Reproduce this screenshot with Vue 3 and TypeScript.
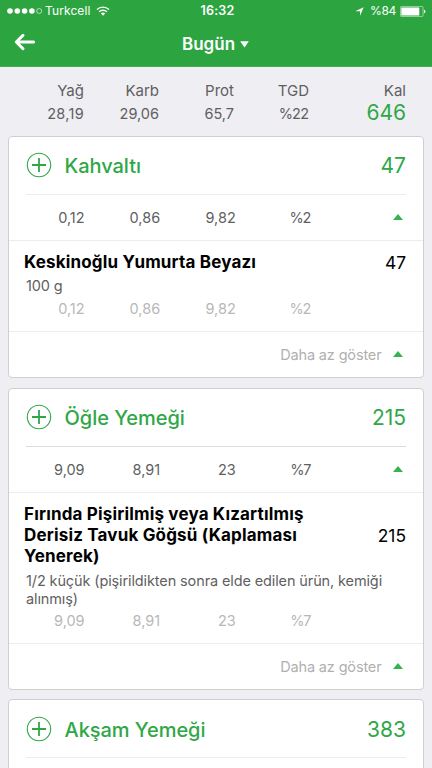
<script setup lang="ts">
interface Food {
  name: string[]
  portion: string[]
  kcal: string
}

interface Meal {
  id: string
  title: string
  kcal: string
  macros: string[]
  food?: Food
}

const summary = [
  { label: 'Yağ', value: '28,19' },
  { label: 'Karb', value: '29,06' },
  { label: 'Prot', value: '65,7' },
  { label: 'TGD', value: '%22' },
]

const meals: Meal[] = [
  {
    id: 'breakfast',
    title: 'Kahvaltı',
    kcal: '47',
    macros: ['0,12', '0,86', '9,82', '%2'],
    food: { name: ['Keskinoğlu Yumurta Beyazı'], portion: ['100 g'], kcal: '47' },
  },
  {
    id: 'lunch',
    title: 'Öğle Yemeği',
    kcal: '215',
    macros: ['9,09', '8,91', '23', '%7'],
    food: {
      name: ['Fırında Pişirilmiş veya Kızartılmış', 'Derisiz Tavuk Göğsü (Kaplaması', 'Yenerek)'],
      portion: ['1/2 küçük (pişirildikten sonra elde edilen ürün, kemiği', 'alınmış)'],
      kcal: '215',
    },
  },
  { id: 'dinner', title: 'Akşam Yemeği', kcal: '383', macros: [] },
]
</script>

<template>
  <div class="screen">
    <header class="top">
      <div class="status">
        <div class="carrier">
          <svg class="signal" width="36" height="8" viewBox="0 0 36 8">
            <circle v-for="n in 4" :key="n" :cx="3 + (n - 1) * 7.3" cy="4" r="2.8" fill="#fff" />
            <circle cx="32.2" cy="4" r="2.5" fill="none" stroke="#fff" stroke-width=".6" />
          </svg>
          <span class="operator">Turkcell</span>
          <svg class="wifi" width="14" height="10" viewBox="0 0 14 10">
            <path d="M1 3.5a8.7 8.7 0 0 1 12 0M3.1 5.8a5.7 5.7 0 0 1 7.8 0" fill="none" stroke="#fff" stroke-width="1.4" />
            <path d="M7 9.7 4.8 7.5a3.2 3.2 0 0 1 4.4 0Z" fill="#fff" />
          </svg>
        </div>
        <span class="clock">16:32</span>
        <div class="power">
          <svg class="location" width="9" height="9" viewBox="0 0 9 9">
            <path d="M8.7.3 5 8.7V4.3H.3Z" fill="#fff" />
          </svg>
          <span class="percent">%84</span>
          <svg width="26" height="11" viewBox="0 0 26 11">
            <rect x=".4" y=".4" width="22.6" height="10.2" rx="1.2" fill="none" stroke="#fff" stroke-opacity=".75" stroke-width=".7" />
            <rect x="1.3" y="1.4" width="18" height="8.2" rx=".5" fill="#fff" />
            <path d="M24 3.8q1.4.2 1.4 1.7T24 7.2Z" fill="#fff" />
          </svg>
        </div>
      </div>
      <nav class="nav">
        <svg class="back" width="22" height="18" viewBox="0 0 22 18">
          <path d="M9 2.3 2.3 9 9 15.7M2.6 9H19.6" fill="none" stroke="#fff" stroke-width="3" stroke-linecap="round" stroke-linejoin="round" />
        </svg>
        <h1>Bugün</h1>
        <svg class="caret" width="9" height="7" viewBox="0 0 9 7"><path d="M.2.3H8.8L4.5 6.5Z" fill="#fff" /></svg>
      </nav>
    </header>

    <section class="summary">
      <div v-for="item in summary" :key="item.label" class="total">
        <span>{{ item.label }}</span>
        <span class="amount">{{ item.value }}</span>
      </div>
      <div class="total energy">
        <span>Kal</span>
        <strong>646</strong>
      </div>
    </section>

    <main class="meals">
      <article v-for="meal in meals" :key="meal.id" class="card" :class="meal.id">
        <div class="head">
          <svg class="plus" width="26" height="26" viewBox="0 0 26 26" fill="none" stroke="#30a747">
            <circle cx="13" cy="13" r="11.7" stroke-width="1.1" />
            <path d="M13 6V20M6 13H20" stroke-width="1.8" />
          </svg>
          <h2>{{ meal.title }}</h2>
          <span class="energy-value">{{ meal.kcal }}</span>
        </div>
        <div class="macros">
          <span v-for="(m, i) in meal.macros" :key="i" class="macro">{{ m }}</span>
          <svg class="up" width="10" height="6" viewBox="0 0 10 6"><path d="M0 6 5 0 10 6Z" fill="#35b34c" /></svg>
        </div>
        <template v-if="meal.food">
          <div class="food">
            <div class="food-top">
              <h3><span v-for="line in meal.food.name" :key="line" class="line">{{ line }}</span></h3>
              <span class="food-kcal">{{ meal.food.kcal }}</span>
            </div>
            <p><span v-for="line in meal.food.portion" :key="line" class="line">{{ line }}</span></p>
            <div class="detail">
              <span v-for="(m, i) in meal.macros" :key="i" class="macro">{{ m }}</span>
            </div>
          </div>
          <div class="less">
            <span>Daha az göster</span>
            <svg class="up" width="10" height="6" viewBox="0 0 10 6"><path d="M0 6 5 0 10 6Z" fill="#35b34c" /></svg>
          </div>
        </template>
      </article>
    </main>
  </div>
</template>

<style>
body { background: #efeef3; }
</style>

<style scoped>
* { box-sizing: border-box; }
h1, h2, h3, p { margin: 0; font-weight: inherit; }
svg { display: block; flex: none; }
.screen { width: 432px; height: 768px; overflow: hidden; background: #efeef3; font-family: Inter, "Liberation Sans", sans-serif; color: #5f5f62; white-space: nowrap; }
.top { height: 67px; background: #2ca541; color: #fff; border-bottom: 1px solid #43ac56; }
.status { height: 22px; display: grid; grid-template-columns: 1fr auto 1fr; align-items: center; padding: 0 6px 0 7px; font-size: 12px; line-height: 22px; }
.carrier, .power { display: flex; align-items: center; }
.operator { margin-left: 2px; letter-spacing: .1px; }
.wifi { margin-left: 6px; }
.clock { margin-left: 2px; font-weight: 600; font-size: 12.5px; letter-spacing: .2px; }
.power { justify-content: flex-end; }
.percent { margin: 0 4px 0 6px; letter-spacing: -.3px; }
.nav { display: flex; align-items: center; height: 44px; padding-left: 14px; }
.back { margin-top: -5px; }
.nav h1 { margin-left: 146px; font-size: 17px; font-weight: 600; line-height: 22px; }
.caret { margin-left: 5px; }
.summary { display: flex; height: 69px; padding: 14px 26px 0 9px; }
.total { width: 75px; display: flex; flex-direction: column; text-align: right; font-size: 15px; line-height: 20px; }
.amount { line-height: 26px; font-size: 14.5px; }
.total:first-child .amount { letter-spacing: .3px; }
.total:nth-child(4) .amount { letter-spacing: -.8px; padding-right: .8px; }
.energy { flex: 1; }
.energy strong { font-size: 21px; line-height: 24px; font-weight: 400; color: #30a747; }
.card { width: 416px; margin: 0 0 10px 8px; background: #fff; border: 1px solid #cfcfcf; border-radius: 4px; }
.lunch { margin-bottom: 9px; }
.head { height: 58px; margin: 0 17px; padding-bottom: 1px; border-bottom: 1px solid #ececec; display: flex; align-items: center; color: #30a747; }
.lunch .head { border-color: #dcdcdc; }
.dinner .head { padding: 1px 0 0; }
.plus { margin-right: 12.5px; }
.head h2 { flex: 1; margin-top: 1px; font-size: 20px; font-weight: 500; line-height: 28px; letter-spacing: -.04px; }
.energy-value { margin-top: 1px; font-size: 21px; line-height: 28px; }
.macros { height: 46px; display: flex; align-items: center; border-bottom: 1px solid #ececec; }
.macro { width: 75.6px; text-align: right; font-size: 14.5px; line-height: 20px; }
.macro:nth-child(4) { letter-spacing: -1.2px; padding-right: 1.2px; }
.macros .up { margin: -2px 20px 0 auto; }
.food { height: 91px; padding-top: 11px; border-bottom: 1px solid #ececec; }
.lunch .food { height: 151px; }
.food-top { display: flex; align-items: center; padding: 0 17px 0 15px; color: #000; }
.line { display: block; }
.food h3 { flex: 1; font-size: 17px; font-weight: 700; line-height: 21px; letter-spacing: .17px; }
.food-kcal { font-size: 17.4px; line-height: 21px; }
.food p { margin: 4px 0 4px 17px; font-size: 14.5px; line-height: 18px; letter-spacing: -.12px; }
.lunch .food p { margin: 5px 0 3px 17px; }
.detail { display: flex; color: #b8b8b8; }
.less { height: 45px; display: flex; align-items: center; justify-content: flex-end; padding-right: 20px; font-size: 14.5px; letter-spacing: -.15px; color: #b0b0b0; }
.less .up { margin: -2px 0 0 11.5px; }
</style>
